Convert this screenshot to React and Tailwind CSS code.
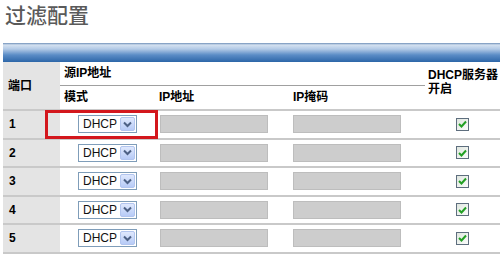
const rows = [1, 2, 3, 4, 5];

function ModeSelect() {
  return (
    <div className="w-[59px] h-[18px] border border-[#7f9db9] bg-white flex items-center justify-between pl-[4px] pr-[1px]">
      <span className="text-[12px] leading-[14px] text-[#111]">DHCP</span>
      <div className="w-[15px] h-[14px] rounded-[2px] bg-[linear-gradient(to_bottom,#dfe8fd,#b7cbf7)] border border-[#b2c5ef] flex items-center justify-center">
        <svg width="9" height="7" viewBox="0 0 9 7">
          <path d="M1 1.5 L4.5 5 L8 1.5" fill="none" stroke="#4d6185" strokeWidth="2" />
        </svg>
      </div>
    </div>
  );
}

function GrayInput() {
  return <div className="w-[108px] h-[18px] bg-[#cdcdcd] border border-[#bdbdbd]"></div>;
}

function Check() {
  return (
    <div className="w-[13px] h-[13px] mx-auto border border-[#5e6e7e] bg-[linear-gradient(135deg,#dfe6df,#fbfcfb)] flex items-center justify-center">
      <svg width="9" height="8" viewBox="0 0 9 8">
        <path d="M1 4 L3.5 6.5 L8 1.5" fill="none" stroke="#22a023" strokeWidth="2" />
      </svg>
    </div>
  );
}

export default function App() {
  return (
    <div className="w-[500px] h-[254px] overflow-hidden bg-white font-['Liberation_Sans','Noto_Sans_CJK_SC',sans-serif]">
      {/* 标题 */}
      <h1 className="pl-[5px] pt-[2px] h-[26px] text-[21px] leading-[24px] text-[#5a5a5a] font-medium font-['Noto_Sans_CJK_SC',sans-serif]">
        过滤配置
      </h1>

      <div className="ml-[3px] mt-[17px] relative">
        {/* 蓝色标题条 */}
        <div className="h-[19px] bg-[linear-gradient(to_bottom,#6f8fb8_0px,#d4e1f0_2px,#b3cae6_6px,#5a8cc6_12px,#2d66a8_19px)]"></div>

        <table className="border-collapse w-[497px] table-fixed text-[12px] text-black font-bold">
          <colgroup>
            <col className="w-[57px]" />
            <col className="w-[96px]" />
            <col className="w-[134px]" />
            <col className="w-[135px]" />
            <col className="w-[75px]" />
          </colgroup>
          <thead>
            <tr className="h-[23px]">
              <td rowSpan={2} className="bg-[#e4e4e4] pl-[5px] border-b-2 border-[#c9c9c9] align-middle">
                端口
              </td>
              <td colSpan={3} className="pl-[4px] border-b border-[#a0a0a0] align-middle">
                源IP地址
              </td>
              <td rowSpan={2} className="align-top pt-[6px] pl-[3px] leading-[14px] border-b-2 border-[#c9c9c9]">
                DHCP服务器
                <br />
                开启
              </td>
            </tr>
            <tr className="h-[25px]">
              <td className="pl-[4px] border-b-2 border-[#c9c9c9]">模式</td>
              <td className="pl-[3px] border-b-2 border-[#c9c9c9]">IP地址</td>
              <td className="pl-[3px] border-b-2 border-[#c9c9c9]">IP掩码</td>
            </tr>
          </thead>
          <tbody>
            {rows.map((n) => (
              <tr key={n} className="h-[28.5px]">
                <td className="bg-[#e4e4e4] pl-[6px] border-b-2 border-[#c9c9c9]">{n}</td>
                <td className="pl-[18px] border-b-2 border-[#c9c9c9] font-normal">
                  <ModeSelect />
                </td>
                <td className="pl-[4px] border-b-2 border-[#c9c9c9]">
                  <GrayInput />
                </td>
                <td className="pl-[3px] border-b-2 border-[#c9c9c9]">
                  <GrayInput />
                </td>
                <td className="border-b-2 border-[#c9c9c9]">
                  <Check />
                </td>
              </tr>
            ))}
          </tbody>
        </table>

        {/* 红色标注框 */}
        <div className="absolute left-[42px] top-[67px] w-[113px] h-[29px] border-[3px] border-[#d3171d]"></div>
      </div>
    </div>
  );
}
